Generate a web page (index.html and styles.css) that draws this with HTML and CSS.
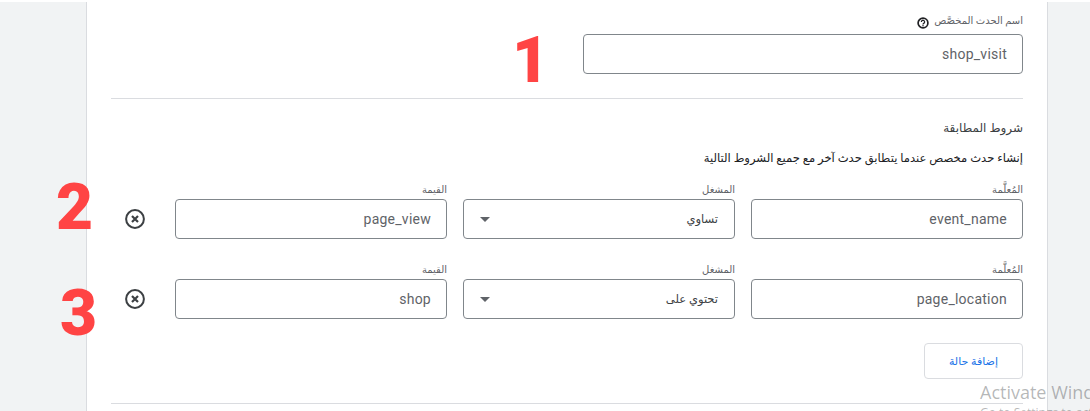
FILE: index.html
```html
<!DOCTYPE html>
<html lang="ar" dir="rtl">
<head>
<meta charset="utf-8">
<title>إنشاء حدث مخصص</title>
<link rel="stylesheet" href="styles.css">
</head>
<body>
<main class="card">
  <section class="name-section">
    <div class="name-label-row">
      <span class="small-label">اسم الحدث المخصَّص</span>
      <svg class="help" viewBox="0 0 12 12" width="12" height="12" aria-hidden="true"><circle cx="6" cy="6" r="4.9" fill="none" stroke="#202124" stroke-width="1.7"/><path d="M4.4 4.9a1.6 1.6 0 1 1 2.5 1.3c-.6.4-.9.6-.9 1.2" fill="none" stroke="#202124" stroke-width="1.3"/><circle cx="6" cy="8.7" r=".75" fill="#202124"/></svg>
    </div>
    <div class="box name-box">shop_visit</div>
  </section>
  <hr class="divider first">
  <h2 class="title">شروط المطابقة</h2>
  <p class="desc">إنشاء حدث مخصص عندما يتطابق حدث آخر مع جميع الشروط التالية</p>
  <div class="rows">
    <div class="row">
      <label class="field"><span class="small-label">المُعلَّمة</span><div class="box">event_name</div></label>
      <label class="field"><span class="small-label">المشغل</span><div class="box select"><span class="ar">تساوي</span><i class="caret"></i></div></label>
      <label class="field"><span class="small-label">القيمة</span><div class="box">page_view</div></label>
      <svg class="remove" viewBox="0 0 20 20" width="20" height="20" aria-hidden="true"><circle cx="10" cy="10" r="8.9" fill="none" stroke="#3c4043" stroke-width="2"/><path d="M7 7l6 6M13 7l-6 6" stroke="#3c4043" stroke-width="2.2"/></svg>
    </div>
    <div class="row">
      <label class="field"><span class="small-label">المُعلَّمة</span><div class="box">page_location</div></label>
      <label class="field"><span class="small-label">المشغل</span><div class="box select"><span class="ar">تحتوي على</span><i class="caret"></i></div></label>
      <label class="field"><span class="small-label">القيمة</span><div class="box">shop</div></label>
      <svg class="remove" viewBox="0 0 20 20" width="20" height="20" aria-hidden="true"><circle cx="10" cy="10" r="8.9" fill="none" stroke="#3c4043" stroke-width="2"/><path d="M7 7l6 6M13 7l-6 6" stroke="#3c4043" stroke-width="2.2"/></svg>
    </div>
  </div>
  <button class="add" type="button">إضافة حالة</button>
  <hr class="divider last">
</main>
<span class="mark mark-1">1</span>
<span class="mark mark-2">2</span>
<span class="mark mark-3">3</span>
<div class="activate" dir="ltr"><div class="act-1">Activate Windows</div><div class="act-2">Go to Settings to activate Windows.</div></div>
</body>
</html>
```
FILE: styles.css
```css
* { box-sizing: border-box; }
html, body { margin: 0; height: 411px; overflow: hidden; background: #fff; }
body {
  position: relative;
  padding: 2px 42px 0 0;
  font-family: Roboto, "DejaVu Sans", sans-serif;
  color: #3c4043;
}
body::before {
  content: "";
  position: absolute;
  inset: 2px 0 0 0;
  background: #f1f3f4;
}
.card {
  position: relative;
  width: 962px;
  height: 409px;
  background: #fff;
  border-left: 1px solid #dadce0;
  border-right: 1px solid #dadce0;
  padding: 12px 24px 0;
}
.name-label-row { display: flex; align-items: center; gap: 5px; height: 14px; }
.small-label { font-size: 10px; line-height: 12px; color: #5f6368; display: block; }
.help { margin-top: 3px; }
.box {
  height: 40px;
  border: 1px solid #80868b;
  border-radius: 4px;
  display: flex;
  align-items: center;
  padding: 0 15px;
  font-size: 14px;
  letter-spacing: .25px;
  color: #5f6368;
  background: #fff;
}
.name-box { width: 440px; margin-top: 6px; }
.divider { border: 0; height: 1px; background: #dadce0; margin: 0; }
.divider.first { margin-top: 24px; }
.title { margin: 20px 0 0; font-size: 12px; line-height: 18px; font-weight: 400; color: #3c4043; }
.desc { margin: 13px 0 0; font-size: 11.6px; line-height: 16px; color: #202124; }
.rows { display: flex; flex-direction: column; gap: 25px; margin-top: 18px; }
.row { display: flex; align-items: flex-end; gap: 16px; }
.field { width: 272px; display: flex; flex-direction: column; gap: 3px; }
.field .small-label { height: 12px; line-height: 12px; }
.select { justify-content: space-between; padding-left: 16px; padding-right: 16px; }
.ar { font-size: 11.5px; letter-spacing: 0; color: #3c4043; }
.caret { width: 0; height: 0; border-left: 5px solid transparent; border-right: 5px solid transparent; border-top: 5px solid #5f6368; }
.remove { margin: 0 14px 10px 0; }
.add {
  display: block;
  margin-top: 24px;
  width: 99px;
  height: 36px;
  background: #fff;
  border: 1px solid #dadce0;
  border-radius: 4px;
  font: 11px Roboto, "DejaVu Sans", sans-serif;
  color: #1a73e8;
  padding: 0;
}
.divider.last { margin-top: 24px; }
.mark {
  position: absolute;
  color: #ff4444;
  font-family: Roboto, sans-serif;
  font-weight: 900;
  font-size: 64px;
  line-height: 64px;
}
.mark-1 { left: 512px; top: 29px; }
.mark-2 { left: 56px; top: 176px; }
.mark-3 { left: 60px; top: 282px; }
.activate { position: absolute; left: 980px; top: 380px; width: 300px; color: rgba(60,64,67,.38); font-family: "Open Sans", sans-serif; white-space: nowrap; }
.act-1 { font-size: 18px; line-height: 24px; }
.act-2 { font-size: 12px; line-height: 18px; }
```
